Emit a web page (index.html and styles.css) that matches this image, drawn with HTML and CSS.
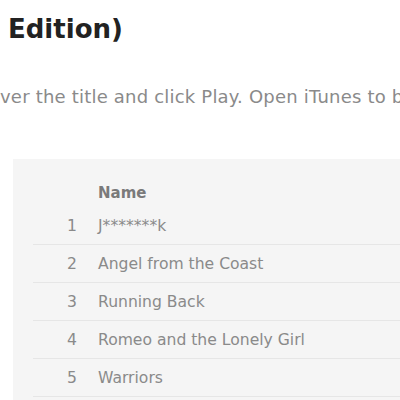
FILE: index.html
```html
<!DOCTYPE html>
<html lang="en">
<head>
<meta charset="utf-8">
<title>Album</title>
<link rel="stylesheet" href="styles.css">
</head>
<body>
<div class="page">
	<h1 class="title">Edition)</h1>
	<p class="hint">ver the title and click Play. Open iTunes to b</p>
	<div class="tracks">
		<table class="track_list">
			<thead>
				<tr><th class="num"></th><th class="name">Name</th></tr>
			</thead>
			<tbody>
				<tr><td class="num">1</td><td class="name">J*******k</td></tr>
				<tr><td class="num">2</td><td class="name">Angel from the Coast</td></tr>
				<tr><td class="num">3</td><td class="name">Running Back</td></tr>
				<tr><td class="num">4</td><td class="name">Romeo and the Lonely Girl</td></tr>
				<tr><td class="num">5</td><td class="name">Warriors</td></tr>
			</tbody>
		</table>
	</div>
</div>
</body>
</html>
```
FILE: styles.css
```css
* {margin:0; padding:0}
html, body {height:100%; overflow:hidden}
body {
	background-color:#fff;
	font-family:"DejaVu Sans", "Liberation Sans", sans-serif;
}

.title {
	padding:13px 0 0 8px;
	font-size:26px;
	line-height:32px;
	font-weight:bold;
	color:#222;
	white-space:nowrap;
}
.hint {
	margin-top:41px;
	font-size:18px;
	line-height:22px;
	letter-spacing:0.2px;
	color:#8a8a8a;
	white-space:nowrap;
}

.tracks {
	margin:51px 0 0 13px;
	padding:20px 0 0 20px;
	height:240px;
	background-color:#f5f5f5;
}
.track_list {
	width:100%;
	border-collapse:collapse;
	font-size:15.6px;
	color:#8a8a8a;
}
.track_list th {
	height:28px;
	text-align:left;
	font-size:15px;
	font-weight:bold;
	color:#7a7a7a;
}
.track_list td {
	height:37px;
	border-bottom:1px solid #e6e6e6;
}
.track_list .num {
	width:44px;
	text-align:right;
}
.track_list .name {
	padding-left:21px;
}
```
